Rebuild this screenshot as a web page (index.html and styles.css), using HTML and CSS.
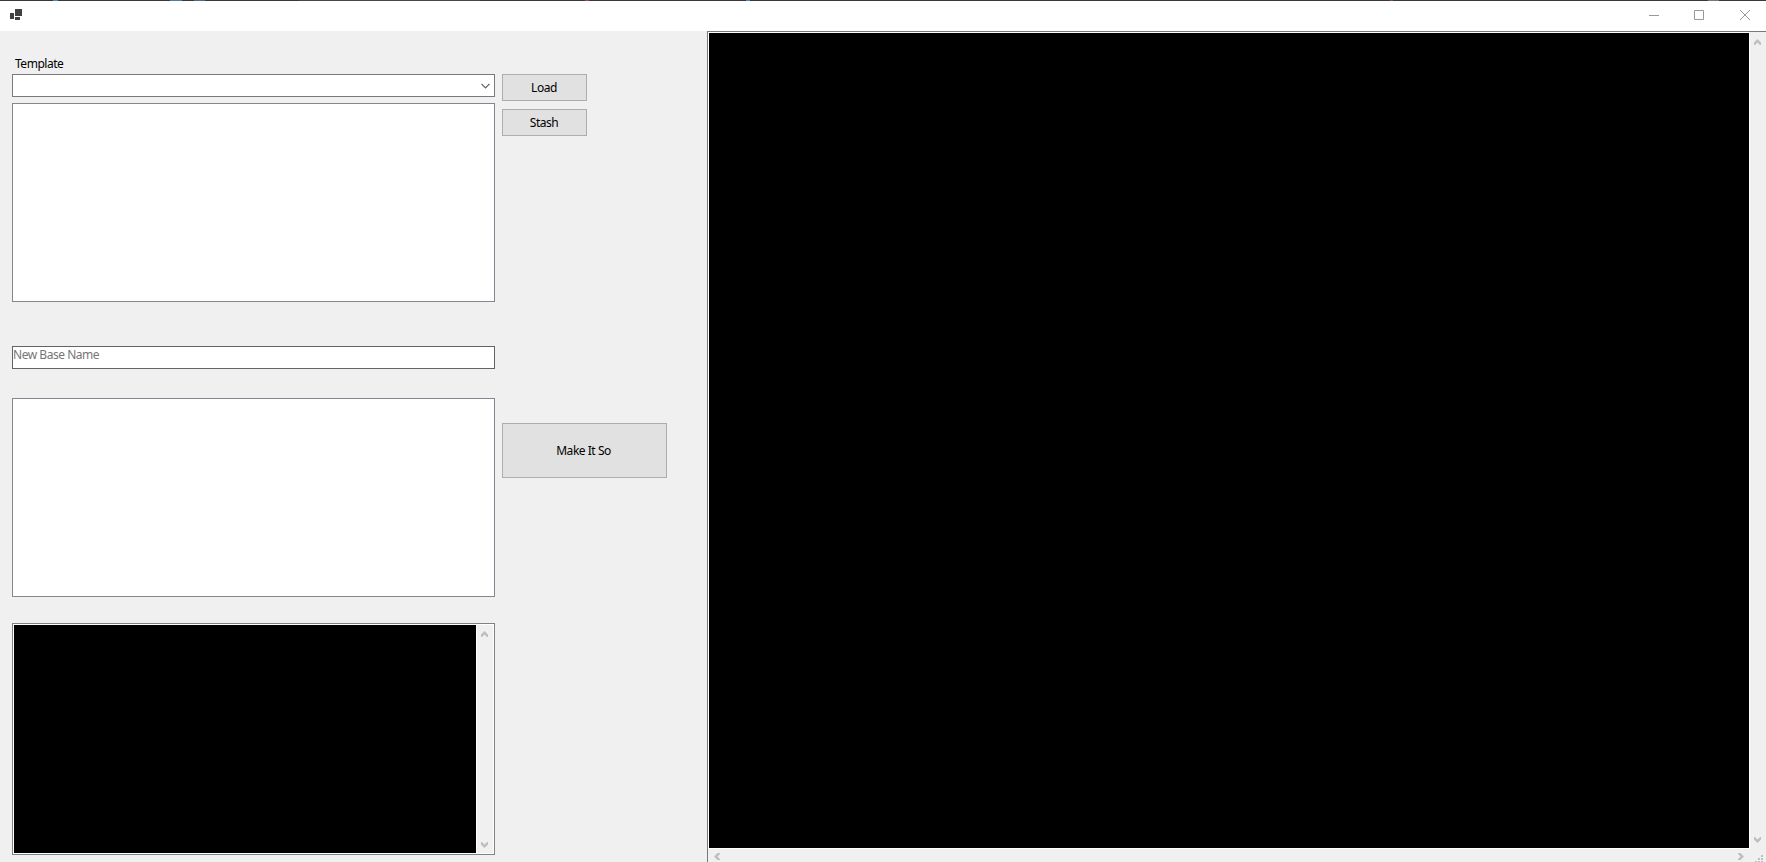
FILE: index.html
```html
<!DOCTYPE html>
<html lang="en">
<head>
<meta charset="utf-8">
<title>Template</title>
<link rel="stylesheet" href="styles.css">
</head>
<body>
<svg width="0" height="0" class="defs"><symbol id="up" viewBox="0 0 7 6"><path d="M0 3.5 3.5 0 7 3.5V6H6L3.5 3.5 1 6H0Z"/></symbol></svg>
<div class="window">
  <div class="backdrop"></div>
  <header class="titlebar">
    <svg class="app-icon" width="12" height="11" shape-rendering="crispEdges"><path d="M5 0h7v7H5zM0 4h4v6H0zM5 8h5v3H5z"/></svg>
    <div class="caption">
      <svg width="10" height="10"><path d="M0 5.5h10"/></svg>
      <svg width="10" height="10"><path d="M.5.5h9v9h-9z"/></svg>
      <svg width="10" height="10"><path d="m0 0 10 10M10 0 0 10"/></svg>
    </div>
  </header>
  <main class="client">
    <section class="form">
      <label class="label">Template</label>
      <div class="row">
        <div class="inputs">
          <div class="combo"><svg width="9" height="6"><path d="m.5.8 4 4 4-4"/></svg></div>
          <div class="list"></div>
        </div>
        <div class="buttons">
          <button class="btn">Load</button>
          <button class="btn">Stash</button>
        </div>
      </div>
      <div class="textbox">New Base Name</div>
      <div class="row second">
        <div class="list"></div>
        <button class="btn large">Make It So</button>
      </div>
      <div class="console">
        <div class="screen"></div>
        <div class="vbar"><svg width="7" height="6"><use href="#up"/></svg><svg class="down" width="7" height="6"><use href="#up"/></svg></div>
      </div>
    </section>
    <section class="output">
      <div class="screen"></div>
      <div class="vbar"><svg width="7" height="6"><use href="#up"/></svg><svg class="down" width="7" height="6"><use href="#up"/></svg></div>
      <div class="hbar"><svg width="6" height="7"><path d="M3.5 0 0 3.5 3.5 7H6V6L3.5 3.5 6 1V0Z"/></svg><svg width="6" height="7"><path d="M2.5 0 6 3.5 2.5 7H0V6L2.5 3.5 0 1V0Z"/></svg></div>
      <div class="grip"><svg width="8" height="7" shape-rendering="crispEdges"><path d="M6 0h2v2H6zM3 3h2v2H3zM6 3h2v2H6zM0 6h2v1H0zM3 6h2v1H3zM6 6h2v1H6z"/></svg></div>
    </section>
  </main>
</div>
</body>
</html>
```
FILE: styles.css
```css
* { box-sizing: border-box; }
body { margin: 0; overflow: hidden; font: 12px/16px "Noto Sans", "Open Sans", sans-serif; letter-spacing: -.47px; color: #000; }
svg { display: block; flex: none; }
.defs { position: absolute; }
.window { width: 1766px; height: 862px; display: flex; flex-direction: column; background: #f0f0f0; }
.backdrop { height: 1px; background: linear-gradient(90deg, #3b383a 0 53px, #4d87ba 53px 58px, #3b383a 58px 170px, #4d7ba6 170px 182px, #3b383a 182px 194px, #4d6c8c 194px 205px, #3b383a 205px 299px, #484547 299px 480px, #3b383a 480px 585px, #a34350 585px 589px, #3b383a 589px 746px, #4d87ba 746px 750px, #3b383a 750px 1390px, #874350 1390px 1393px, #3b383a 1393px 1708px, #777 1708px 1719px, #3b383a 1719px); }
.titlebar { height: 30px; background: #fff; display: flex; justify-content: space-between; padding: 8px 16px 0 10px; }
.app-icon { fill: #404040; }
.caption { display: flex; gap: 36px; padding-top: 1px; }
.caption svg { fill: none; stroke: #999; }
.caption svg:first-child { margin-right: -1px; }
.client { height: 831px; display: flex; }
.form { width: 707px; padding: 25px 0 0 12px; }
.label { display: block; height: 18px; padding-left: 3px; }
.row { display: flex; gap: 7px; }
.inputs { width: 483px; display: grid; gap: 6px; }
.combo { height: 23px; background: #fff; border: 1px solid #7a7a7a; display: flex; justify-content: flex-end; padding: 8px 4px 0 0; }
.combo svg { fill: none; stroke: #606060; stroke-width: 1.2; }
.list { width: 483px; height: 199px; background: #fff; border: 1px solid #828790; }
.buttons { display: flex; flex-direction: column; gap: 8px; }
.btn { display: flex; align-items: center; justify-content: center; width: 85px; height: 27px; padding: 0 1px 0 0; border: 1px solid #adadad; background: #e1e1e1; font: inherit; letter-spacing: inherit; color: #000; border-radius: 0; }
.btn.large { width: 165px; height: 55px; margin-top: 25px; padding-right: 2px; }
.textbox { width: 483px; height: 23px; margin-top: 44px; background: #fff; border: 1px solid #646464; color: #767676; white-space: nowrap; }
.second { margin-top: 29px; }
.console { display: grid; grid-template-columns: 462px 16px; gap: 1px; width: 483px; height: 232px; margin-top: 26px; padding: 1px; border: 1px solid #828282; background: #fff; }
.screen { background: #000; }
.vbar { background: #f0f0f0; display: flex; flex-direction: column; justify-content: space-between; align-items: flex-start; padding: 6px 0 5px 4px; fill: #bfbfbf; }
.down { transform: scaleY(-1); }
.output { width: 1059px; display: grid; grid-template: 815px 13px / 1040px 16px; gap: 1px; padding: 1px 0 0 1px; border: solid #7a7a7a; border-width: 1px 0 0 1px; background: #f0f0f0; }
.output > .screen { box-shadow: 0 0 0 1px #fff; }
.hbar { background: #f0f0f0; display: flex; justify-content: space-between; padding: 4px 5px 0; fill: #bfbfbf; }
.grip { background: #f0f0f0; padding: 6px 0 0 5px; fill: #bfbfbf; }
```
